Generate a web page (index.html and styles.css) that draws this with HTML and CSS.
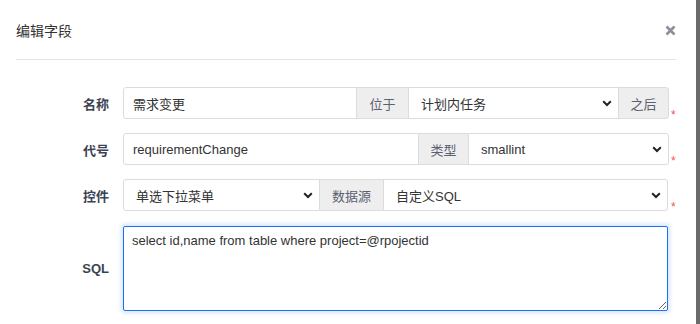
FILE: index.html
```html
<!DOCTYPE html>
<html lang="zh">
<head>
<meta charset="utf-8">
<title>编辑字段</title>
<link rel="stylesheet" href="styles.css">
</head>
<body>
<div class="modal">
  <div class="modal-header">
    <div class="modal-title">编辑字段</div>
    <svg class="close" width="11" height="11" viewBox="0 0 11 11"><path d="M1.5 1.5 L9.5 9.5 M9.5 1.5 L1.5 9.5" stroke="#8a8f9b" stroke-width="2.6" stroke-linecap="butt"/></svg>
  </div>
  <div class="modal-body">
    <div class="form-row">
      <div class="label">名称</div>
      <div class="group">
        <div class="control input w233">需求变更</div>
        <div class="addon w52">位于</div>
        <div class="control select w210"><span>计划内任务</span><svg class="chev" width="10" height="7" viewBox="0 0 10 7"><path d="M1.2 1.3 L5 5 L8.8 1.3" fill="none" stroke="#222" stroke-width="2"/></svg></div>
        <div class="addon w50">之后</div>
      </div>
      <span class="req">*</span>
    </div>
    <div class="form-row">
      <div class="label">代号</div>
      <div class="group">
        <div class="control input w295">requirementChange</div>
        <div class="addon w50">类型</div>
        <div class="control select w200"><span>smallint</span><svg class="chev" width="10" height="7" viewBox="0 0 10 7"><path d="M1.2 1.3 L5 5 L8.8 1.3" fill="none" stroke="#222" stroke-width="2"/></svg></div>
      </div>
      <span class="req">*</span>
    </div>
    <div class="form-row">
      <div class="label">控件</div>
      <div class="group">
        <div class="control select w196"><span>单选下拉菜单</span><svg class="chev" width="10" height="7" viewBox="0 0 10 7"><path d="M1.2 1.3 L5 5 L8.8 1.3" fill="none" stroke="#222" stroke-width="2"/></svg></div>
        <div class="addon w64">数据源</div>
        <div class="control select w285"><span>自定义SQL</span><svg class="chev" width="10" height="7" viewBox="0 0 10 7"><path d="M1.2 1.3 L5 5 L8.8 1.3" fill="none" stroke="#222" stroke-width="2"/></svg></div>
      </div>
      <span class="req">*</span>
    </div>
    <div class="form-row sql-row">
      <div class="label">SQL</div>
      <textarea class="sql">select id,name from table where project=@rpojectid</textarea>
    </div>
  </div>
</div>
<div class="backdrop"></div>
</body>
</html>
```
FILE: styles.css
```css
html, body {
  margin: 0;
  padding: 0;
  height: 324px;
  overflow: hidden;
}
body {
  display: flex;
  font-family: "Liberation Sans", "Noto Sans CJK SC", sans-serif;
  font-size: 13px;
  color: #333;
  background: #6b6b6b;
}
.modal {
  width: 696px;
  height: 324px;
  background: #fff;
  flex: none;
}
.backdrop {
  flex: 1;
  background: #6b6b6b;
}
.modal-header {
  margin: 0 20px 0 16px;
  height: 59px;
  border-bottom: 1px solid #e5e5e5;
  display: flex;
  align-items: center;
  justify-content: space-between;
}
.modal-title {
  font-size: 14px;
  color: #333;
  padding-top: 1px;
}
.close {
  margin-right: 0;
  margin-top: 1px;
}
.modal-body {
  padding: 27px 0 0 16px;
  display: flex;
  flex-direction: column;
  gap: 14px;
}
.form-row {
  display: flex;
  align-items: center;
}
.label {
  width: 93px;
  text-align: right;
  font-weight: bold;
  color: #3c4353;
  margin-right: 14px;
  font-size: 13px;
  flex: none;
}
.group {
  display: flex;
  height: 32px;
  width: 545px;
}
.control, .addon {
  box-sizing: border-box;
  height: 32px;
  border: 1px solid #dcdcdc;
  display: flex;
  align-items: center;
  flex: none;
}
.group > * + * {
  margin-left: -1px;
}
.group > *:first-child {
  border-radius: 3px 0 0 3px;
}
.group > *:last-child {
  border-radius: 0 3px 3px 0;
}
.input {
  padding-left: 9px;
  color: #333;
}
.select {
  padding: 0 6px 0 12px;
  justify-content: space-between;
  color: #333;
}
.addon {
  background: #eeeeee;
  justify-content: center;
  color: #5a6070;
}
.chev {
  flex: none;
}
.w233 { width: 234px; }
.w52 { width: 53px; }
.w210 { width: 211px; }
.w50 { width: 51px; }
.w295 { width: 296px; }
.w200 { width: 201px; }
.w196 { width: 197px; }
.w64 { width: 65px; }
.w285 { width: 285px; }
.req {
  color: #f45454;
  font-size: 12px;
  align-self: flex-end;
  margin-left: 3px;
  margin-bottom: -3px;
}
.sql-row {
  margin-top: 1px;
}
.sql {
  box-sizing: border-box;
  width: 545px;
  height: 85px;
  border: 1px solid #1d6ff2;
  border-radius: 2px;
  box-shadow: 0 0 4px 2px rgba(29, 111, 242, 0.18);
  padding: 6px 8px;
  font-family: "Liberation Sans", "Noto Sans CJK SC", sans-serif;
  font-size: 13px;
  color: #333;
  outline: none;
  margin: 0;
  resize: vertical;
}
```
